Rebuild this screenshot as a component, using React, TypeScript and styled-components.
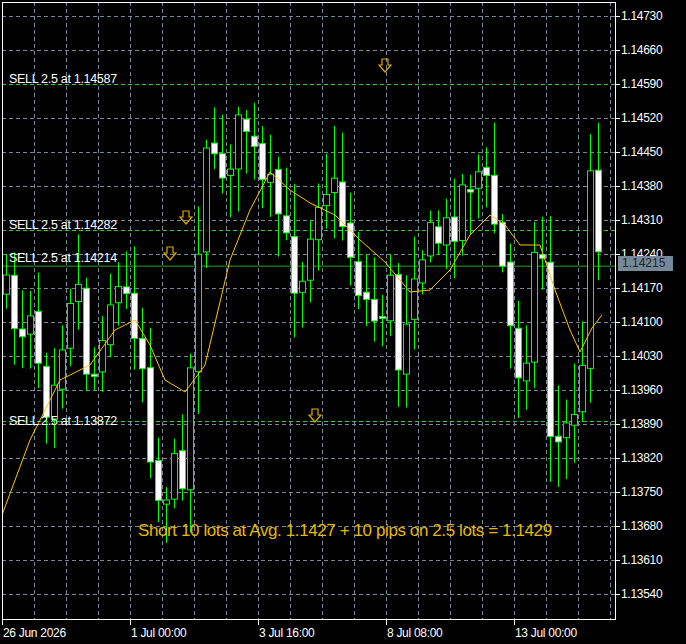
import React from 'react';
import styled, { createGlobalStyle } from 'styled-components';

const GlobalStyle = createGlobalStyle`
  html, body { margin: 0; padding: 0; background: #000; }
  body { font-family: "Liberation Sans", Arial, sans-serif; }
`;

const W = 686;
const H = 644;
const PLOT_W = 614;
const PLOT_H = 618;

const priceToY = (p: number) => 14 + ((1.1473 - p) / 0.0007) * 34;

const Screen = styled.div`
  width: ${W}px;
  height: ${H}px;
  background: #000;
  overflow: hidden;
  display: flex;
  flex-direction: column;
  padding: 2px 0 0 2px;
  box-sizing: border-box;
`;

const TopRow = styled.div`
  display: flex;
`;

const Plot = styled.div`
  position: relative;
  width: ${PLOT_W}px;
  height: ${PLOT_H}px;
`;

const Chart = styled.svg`
  display: block;
`;

const PriceAxis = styled.div`
  position: relative;
  display: flex;
  flex-direction: column;
  padding: 8px 0 0 5px;
`;

const PriceLabel = styled.div`
  height: 34px;
  color: #fff;
  font-size: 12px;
  line-height: 12px;
  letter-spacing: -0.3px;
  white-space: nowrap;
`;

const BidTag = styled.div`
  position: absolute;
  left: 2px;
  top: 254px;
  width: 55px;
  height: 15px;
  background: #778899;
  color: #1a2430;
  font-size: 12px;
  line-height: 15px;
  padding-left: 4px;
  box-sizing: border-box;
`;

const TimeAxis = styled.div`
  display: flex;
  padding: 5px 0 0 1px;
`;

const TimeLabel = styled.div`
  width: 128px;
  color: #fff;
  font-size: 12px;
  line-height: 12px;
  letter-spacing: -0.3px;
  white-space: nowrap;
`;

const OrderNote = styled.div<{ $y: number }>`
  position: absolute;
  left: 7px;
  top: ${p => p.$y}px;
  color: #fff;
  font-size: 12.5px;
  line-height: 12px;
  letter-spacing: -0.3px;
`;

const Summary = styled.div`
  position: absolute;
  left: 136px;
  top: 519px;
  color: #e6b800;
  font-size: 17px;
  letter-spacing: -0.4px;
  white-space: nowrap;
`;

// target close levels (pixel y) along x
const keys: [number, number][] = [
  [4, 298], [18, 328], [28, 298], [43, 398], [58, 338], [73, 258], [88, 398], [103, 298],
  [118, 288], [133, 318], [143, 378], [153, 498], [168, 478], [183, 458], [193, 278],
  [203, 128], [213, 178], [228, 148], [243, 118], [258, 188], [273, 198], [288, 268],
  [298, 278], [313, 188], [328, 178], [343, 228], [358, 288], [373, 318], [388, 288],
  [398, 378], [408, 258], [418, 248], [433, 238], [448, 228], [463, 178], [478, 168],
  [493, 223], [503, 288], [513, 368], [523, 348], [538, 198], [546, 418], [558, 448],
  [570, 408], [580, 378], [588, 148], [596, 248], [602, 258],
];

const interp = (x: number) => {
  for (let i = 0; i < keys.length - 1; i++) {
    const [x0, y0] = keys[i];
    const [x1, y1] = keys[i + 1];
    if (x >= x0 && x <= x1) return y0 + ((y1 - y0) * (x - x0)) / (x1 - x0);
  }
  return keys[keys.length - 1][1];
};

let seed = 7;
const rnd = () => {
  seed = (seed * 16807) % 2147483647;
  return (seed - 1) / 2147483646;
};

type Candle = { x: number; o: number; c: number; h: number; l: number };
const candles: Candle[] = [];
let prev = 288;
for (let x = 4; x <= 602; x += 8) {
  const c = interp(x) + (rnd() - 0.5) * 50;
  const o = prev + (rnd() - 0.5) * 10;
  const top = Math.min(o, c);
  const bot = Math.max(o, c);
  candles.push({ x, o, c, h: top - 8 - rnd() * 45, l: bot + 6 + rnd() * 40 });
  prev = c;
}

const maKeys: [number, number][] = [
  [0, 513], [28, 438], [58, 378], [88, 363], [113, 328], [133, 318], [148, 343], [163, 378],
  [183, 390], [203, 363], [228, 258], [248, 208], [268, 170], [288, 188], [308, 201],
  [333, 213], [358, 238], [383, 260], [408, 290], [428, 288], [448, 268], [468, 233],
  [488, 213], [503, 223], [518, 243], [538, 243], [553, 288], [568, 328], [578, 350],
  [590, 326], [600, 313],
];

const prices = ['1.14730', '1.14660', '1.14590', '1.14520', '1.14450', '1.14380', '1.14310', '1.14240',
  '1.14170', '1.14100', '1.14030', '1.13960', '1.13890', '1.13820', '1.13750', '1.13680', '1.13610', '1.13540'];

const times = ['26 Jun 2026', '1 Jul 00:00', '3 Jul 16:00', '8 Jul 08:00', '13 Jul 00:00'];

const arrows: [number, number][] = [[383, 64], [184, 216], [168, 252], [313, 414]];

const ArrowDown: React.FC<{ x: number; y: number }> = ({ x, y }) => (
  <path
    d={`M${x - 3} ${y - 7} h6 v6 h3 l-6 7 l-6 -7 h3 z`}
    fill="none"
    stroke="#e0a800"
    strokeWidth={1.2}
  />
);

export default function App() {
  const hLines = prices.map((_, i) => 14 + i * 34);
  const vLines: number[] = [];
  for (let x = 32; x < PLOT_W; x += 32) vLines.push(x);
  const ma = maKeys.map(([x, y]) => `${x},${y}`).join(' ');
  const orderLines = [82, 228, 419];
  const bidY = priceToY(1.14215);

  return (
    <Screen>
      <GlobalStyle />
      <TopRow>
        <Plot>
          <Chart width={PLOT_W + 5} height={PLOT_H + 6}>
            {hLines.map(y => (
              <line key={'h' + y} x1={0} x2={PLOT_W} y1={y + 0.5} y2={y + 0.5} stroke="#778899" strokeDasharray="4 3" />
            ))}
            {vLines.map(x => (
              <line key={'v' + x} x1={x + 0.5} x2={x + 0.5} y1={0} y2={PLOT_H} stroke="#778899" strokeDasharray="4 3" />
            ))}
            {orderLines.map(y => (
              <line key={'o' + y} x1={0} x2={PLOT_W} y1={y + 0.5} y2={y + 0.5} stroke="#32cd32" strokeDasharray="4 3" />
            ))}
            <line x1={0} x2={PLOT_W} y1={bidY} y2={bidY} stroke="#32cd32" opacity={0.8} />
            {candles.map((k, i) => {
              const top = Math.min(k.o, k.c);
              const h = Math.max(Math.abs(k.c - k.o), 1);
              const bear = k.c > k.o;
              return (
                <g key={i}>
                  <line x1={k.x + 0.5} x2={k.x + 0.5} y1={k.h} y2={k.l} stroke="#00ff00" />
                  <rect x={k.x - 2.5} y={top} width={6} height={h} fill={bear ? '#fff' : '#000'} stroke="#00ff00" />
                </g>
              );
            })}
            <polyline points={ma} fill="none" stroke="#ffc400" />
            {arrows.map(([x, y]) => <ArrowDown key={x} x={x} y={y} />)}
            <rect x={0.5} y={0.5} width={PLOT_W - 1} height={PLOT_H - 1} fill="none" stroke="#fff" />
            {hLines.map(y => (
              <line key={'t' + y} x1={PLOT_W} x2={PLOT_W + 4} y1={y + 0.5} y2={y + 0.5} stroke="#fff" />
            ))}
            {times.map((_, i) => (
              <line key={'tt' + i} x1={i * 128 + 0.5} x2={i * 128 + 0.5} y1={PLOT_H} y2={PLOT_H + 5} stroke="#fff" />
            ))}
          </Chart>
          <OrderNote $y={71}>SELL 2.5 at 1.14587</OrderNote>
          <OrderNote $y={217}>SELL 2.5 at 1.14282</OrderNote>
          <OrderNote $y={250}>SELL 2.5 at 1.14214</OrderNote>
          <OrderNote $y={413}>SELL 2.5 at 1.13872</OrderNote>
          <Summary>Short 10 lots at Avg. 1.1427 + 10 pips on 2.5 lots = 1.1429</Summary>
        </Plot>
        <PriceAxis>
          {prices.map(p => <PriceLabel key={p}>{p}</PriceLabel>)}
          <BidTag>1.14215</BidTag>
        </PriceAxis>
      </TopRow>
      <TimeAxis>
        {times.map(t => <TimeLabel key={t}>{t}</TimeLabel>)}
      </TimeAxis>
    </Screen>
  );
}
